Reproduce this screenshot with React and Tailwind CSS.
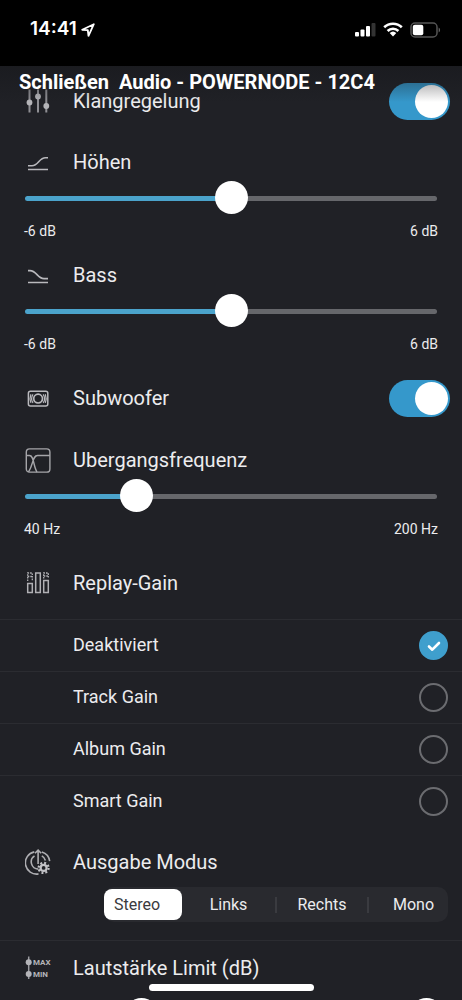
import { useState } from "react";

const rangeClass =
  "block h-8 w-full cursor-pointer appearance-none bg-transparent " +
  "[&::-webkit-slider-runnable-track]:h-[5px] [&::-webkit-slider-runnable-track]:rounded-full [&::-webkit-slider-runnable-track]:bg-(image:--track) " +
  "[&::-webkit-slider-thumb]:-mt-[15px] [&::-webkit-slider-thumb]:size-[33px] [&::-webkit-slider-thumb]:appearance-none [&::-webkit-slider-thumb]:rounded-full [&::-webkit-slider-thumb]:bg-white";

const trackFill = (pct) => ({
  "--track": `linear-gradient(to right, #4ba3cb ${pct}%, #66676b ${pct}%)`,
});

function SlidersIcon() {
  return (
    <svg viewBox="0 0 26 26" className="size-[26px]" fill="#b4b4b8" stroke="#8f8f94" strokeWidth="2">
      <path d="M4.500 1.500v23M13 1.500v23M21.300 1.500v23" />
      <g stroke="none">
        <circle cx="4.500" cy="14.500" r="2.900" />
        <circle cx="13" cy="8.500" r="2.900" />
        <circle cx="21.300" cy="18" r="2.900" />
      </g>
    </svg>
  );
}

function TrebleIcon() {
  return (
    <svg viewBox="0 0 26 26" className="size-[26px]" fill="none" stroke="#b9b9bd" strokeWidth="1.600">
      <path d="M3 16.800h4c3 0 4.800-1.800 6.700-4s3.800-4 6.800-4H23M3 20.500h20" />
    </svg>
  );
}

function BassIcon() {
  return (
    <svg viewBox="0 0 26 26" className="size-[26px]" fill="none" stroke="#b9b9bd" strokeWidth="1.600">
      <path d="M3 8.600h2c3 0 5 1.800 7 4s4 4 7 4h4M3 20.500h20" />
    </svg>
  );
}

function SubwooferIcon() {
  return (
    <svg viewBox="0 0 26 26" className="size-[26px]" fill="none" stroke="#b9b9bd" strokeWidth="1.500">
      <rect x="3.400" y="6.300" width="19.400" height="14.600" rx="2" />
      <circle cx="13.100" cy="13.600" r="4.400" strokeWidth="1.700" />
      <path d="M8 9.300c-1.700 2.600-1.700 6 0 8.600M5.900 9.300c-1 2.600-1 6 0 8.600M18.200 9.300c1.700 2.600 1.700 6 0 8.600M20.300 9.300c1 2.600 1 6 0 8.600" strokeWidth="1.200" />
    </svg>
  );
}

function CrossoverIcon() {
  return (
    <svg viewBox="0 0 26 26" className="size-[26px]" fill="none" stroke="#a5a5a9" strokeWidth="1.400">
      <rect x="1.300" y="1.900" width="23.600" height="23.200" rx="3.200" />
      <path d="M1.300 8.500h3.200c2.500 0 3.200 2.500 4.500 8 .8 3.400 1.600 6.500 3 8.500M3.500 25c1.700-2.500 2.800-5.500 4-9.500 1.300-4.500 2.200-7 5-7h12.400" />
    </svg>
  );
}

function ReplayGainIcon() {
  return (
    <svg viewBox="0 0 26 26" className="size-[26px]" fill="none" stroke="#b0b0b4" strokeWidth="1.500">
      <rect x="2.700" y="13.500" width="4.600" height="9" />
      <rect x="10.700" y="3" width="4.600" height="19.500" />
      <rect x="18.700" y="10.500" width="4.600" height="12" />
      <path d="M2.700 11V3h4.600v8M18.700 8.500V3h4.600v5.500M2.700 6.500h4.600M18.700 6h4.600" strokeWidth="1.300" strokeDasharray="1.600 1" />
    </svg>
  );
}

function OutputIcon() {
  return (
    <svg viewBox="0 0 26 26" className="size-[26px]" fill="none" stroke="#aeaeb2" strokeWidth="1.600">
      <path d="M9.300 2.900A11.200 11.200 0 0 0 13.500 24.900M16.800 2.900a11.200 11.200 0 0 1 7.900 9.200M9.500 6.900a7.200 7.200 0 0 0 3.800 13.200M16.800 6.900a7.200 7.200 0 0 1 3.600 4.600" />
      <path d="M13.100 15V1.500M10 4.300l3.100-3.100 3.100 3.100" />
      <g stroke="#c2c2c6">
        <circle cx="18.600" cy="18.900" r="3" strokeWidth="2.200" />
        <circle cx="18.600" cy="18.900" r="5" strokeWidth="2.200" strokeDasharray="1.960 1.960" />
      </g>
    </svg>
  );
}

function LimitIcon() {
  return (
    <svg viewBox="0 0 26 26" className="size-[26px] overflow-visible" fill="#b4b4b8">
      <path d="M3.700 1.500v22.500" stroke="#9b9ba0" strokeWidth="1.500" />
      <circle cx="3.700" cy="7.300" r="3" />
      <circle cx="3.700" cy="19" r="3" />
      <text x="8" y="10.300" fontSize="8" fontWeight="700">MAX</text>
      <text x="8" y="22" fontSize="8" fontWeight="700">MIN</text>
    </svg>
  );
}

function Title({ icon, children }) {
  return (
    <span className="flex items-center gap-[22px]">
      <span className="flex shrink-0">{icon}</span>
      {children}
    </span>
  );
}

function ToggleRow({ id, icon, label, className }) {
  const [on, setOn] = useState(true);
  return (
    <div className={`flex items-center justify-between pr-3 pl-[25px] ${className}`}>
      <label htmlFor={id}>
        <Title icon={icon}>{label}</Title>
      </label>
      <input
        id={id}
        type="checkbox"
        role="switch"
        checked={on}
        onChange={(e) => setOn(e.target.checked)}
        className="flex h-[37px] w-[61px] cursor-pointer appearance-none items-center rounded-full bg-[#55565b] p-0.5 before:size-[33px] before:rounded-full before:bg-white checked:justify-end checked:bg-[#3598cb]"
      />
    </div>
  );
}

function SliderSection({ id, icon, label, min, max, initial, unit }) {
  const [value, setValue] = useState(initial);
  return (
    <section className="px-[25px]">
      <label htmlFor={id} className="flex h-[46px] items-center pt-1.5">
        <Title icon={icon}>{label}</Title>
      </label>
      <input
        id={id}
        type="range"
        min={min}
        max={max}
        value={value}
        onChange={(e) => setValue(Number(e.target.value))}
        className={rangeClass}
        style={trackFill(((value - min) / (max - min)) * 100)}
      />
      <div className="-mx-px flex h-[35px] items-center justify-between pb-0.5 text-sm">
        <span>{min} {unit}</span>
        <span>{max} {unit}</span>
      </div>
    </section>
  );
}

const gains = ["Deaktiviert", "Track Gain", "Album Gain", "Smart Gain"];

const modes = [
  { name: "Stereo", pad: "pr-3" },
  { name: "Links", pad: "" },
  { name: "Rechts", pad: "border-l-2" },
  { name: "Mono", pad: "border-l-2 pl-2.5" },
];

export default function App() {
  const [gain, setGain] = useState("Deaktiviert");
  const [mode, setMode] = useState("Stereo");
  const [low, setLow] = useState(26);
  const [high, setHigh] = useState(100);

  return (
    <div className="flex h-screen flex-col overflow-hidden bg-[#202126] font-[Roboto,sans-serif] text-xl text-[#ececee]">
      <div className="flex h-[66px] shrink-0 items-center justify-between bg-black pr-[21px] pb-[7px] pl-[30px] text-white">
        <span className="flex items-center gap-1 font-[Inter,sans-serif] text-[19px] font-semibold">
          14:41
          <svg viewBox="0 0 14 14" className="size-3.5" fill="none" stroke="white" strokeWidth="1.800" strokeLinejoin="round">
            <path d="M1.200 6.800 12.800 1.200 7.500 12.800 6.800 7.200Z" />
          </svg>
        </span>
        <span className="flex items-center gap-[7px]">
          <svg viewBox="0 0 21 15" className="h-[15px] w-[21px]" fill="white">
            <rect x="0" y="10" width="4" height="4.500" rx="1" />
            <rect x="5.500" y="7.500" width="4" height="7" rx="1" />
            <rect x="11" y="4" width="4" height="10.500" rx="1" />
            <rect x="16.500" y="1" width="4" height="13.500" rx="1" fill="#333" />
          </svg>
          <svg viewBox="0 0 20 15" className="h-[15px] w-5" fill="none" stroke="white" strokeWidth="2.600">
            <path d="M1.200 5.300a12.600 12.600 0 0 1 17.600 0M4.600 9a7.700 7.700 0 0 1 10.800 0" />
            <path d="M6.700 11a4.800 4.800 0 0 1 6.600 0L10 14.500Z" fill="white" stroke="none" />
          </svg>
          <svg viewBox="0 0 31 16" className="h-4 w-[31px]">
            <rect x="1" y="1" width="26" height="14" rx="4" fill="none" stroke="#555" strokeWidth="1.500" />
            <rect x="2.800" y="2.800" width="10.500" height="10.400" rx="2" fill="white" />
            <path d="M28.700 5.500a3 3 0 0 1 0 5Z" fill="#666" />
          </svg>
        </span>
      </div>

      <div className="relative min-h-0 flex-1">
        <header className="absolute inset-x-0 top-0 z-10 flex h-9 items-center gap-2.5 bg-linear-to-b from-[#17181c]/60 to-transparent pb-1 pl-[19px] text-xl font-bold whitespace-pre text-white">
          <button type="button">Schließen</button>
          <h1>Audio - POWERNODE - 12C4</h1>
        </header>

        <main className="h-full overflow-hidden">
          <ToggleRow id="tone" icon={<SlidersIcon />} label="Klangregelung" className="h-[70px]" />
          <SliderSection id="treble" icon={<TrebleIcon />} label="Höhen" min={-6} max={6} initial={0} unit="dB" />
          <SliderSection id="bass" icon={<BassIcon />} label="Bass" min={-6} max={6} initial={0} unit="dB" />
          <ToggleRow id="sub" icon={<SubwooferIcon />} label="Subwoofer" className="h-[72px]" />
          <SliderSection id="crossover" icon={<CrossoverIcon />} label="Ubergangsfrequenz" min={40} max={200} initial={80} unit="Hz" />

          <fieldset>
            <legend className="flex h-[72px] items-center pl-[25px]">
              <Title icon={<ReplayGainIcon />}>Replay-Gain</Title>
            </legend>
            {gains.map((name) => (
              <label key={name} className="flex h-[52px] cursor-pointer items-center justify-between border-t border-[#2b2c31] pr-3.5 pl-[73px] text-lg">
                <span className="pb-0.5">{name}</span>
                <span className="grid place-items-center *:col-start-1 *:row-start-1">
                  <input
                    type="radio"
                    name="gain"
                    checked={gain === name}
                    onChange={() => setGain(name)}
                    className="size-[29px] cursor-pointer appearance-none rounded-full border-2 border-[#6b6c70] checked:border-[#3f9fcd] checked:bg-[#3f9fcd]"
                  />
                  {gain === name && (
                    <svg viewBox="0 0 14 14" className="pointer-events-none size-3.5" fill="none" stroke="white" strokeWidth="2.600" strokeLinecap="round" strokeLinejoin="round">
                      <path d="m2 7.500 3.300 3.200L12 4" />
                    </svg>
                  )}
                </span>
              </label>
            ))}
          </fieldset>

          <section className="pb-[18px]">
            <h2 className="flex h-[60px] items-center pt-2.5 pl-[25px]">
              <Title icon={<OutputIcon />}>Ausgabe Modus</Title>
            </h2>
            <div className="mr-3.5 ml-[104px] grid h-[35px] grid-cols-[78fr_93fr_92fr_81fr] items-center rounded-[10px] bg-[#292a2f] text-base">
              {modes.map(({ name, pad }) => (
                <button
                  key={name}
                  type="button"
                  aria-pressed={mode === name}
                  onClick={() => setMode(name)}
                  className={`border-[#3a3b40] ${pad} ${mode === name ? "h-[31px] rounded-lg bg-white text-[#3a3a3e]" : "h-4 leading-4"}`}
                >
                  {name}
                </button>
              ))}
            </div>
          </section>

          <section className="border-t border-[#2b2c31]">
            <h2 className="flex h-[54px] items-center pl-[25px]">
              <Title icon={<LimitIcon />}>Lautstärke Limit (dB)</Title>
            </h2>
            <div className="grid pt-1 pr-[19px] pl-[25px] *:col-start-1 *:row-start-1">
              <input type="range" aria-label="Minimum" value={low} onChange={(e) => setLow(Number(e.target.value))} className={rangeClass} style={trackFill(low)} />
              <input type="range" aria-label="Maximum" value={high} onChange={(e) => setHigh(Number(e.target.value))} className={rangeClass} />
            </div>
          </section>
        </main>

        <div className="absolute inset-x-0 bottom-[9px] mx-auto h-[7px] w-[165px] rounded-full bg-white" />
      </div>
    </div>
  );
}
